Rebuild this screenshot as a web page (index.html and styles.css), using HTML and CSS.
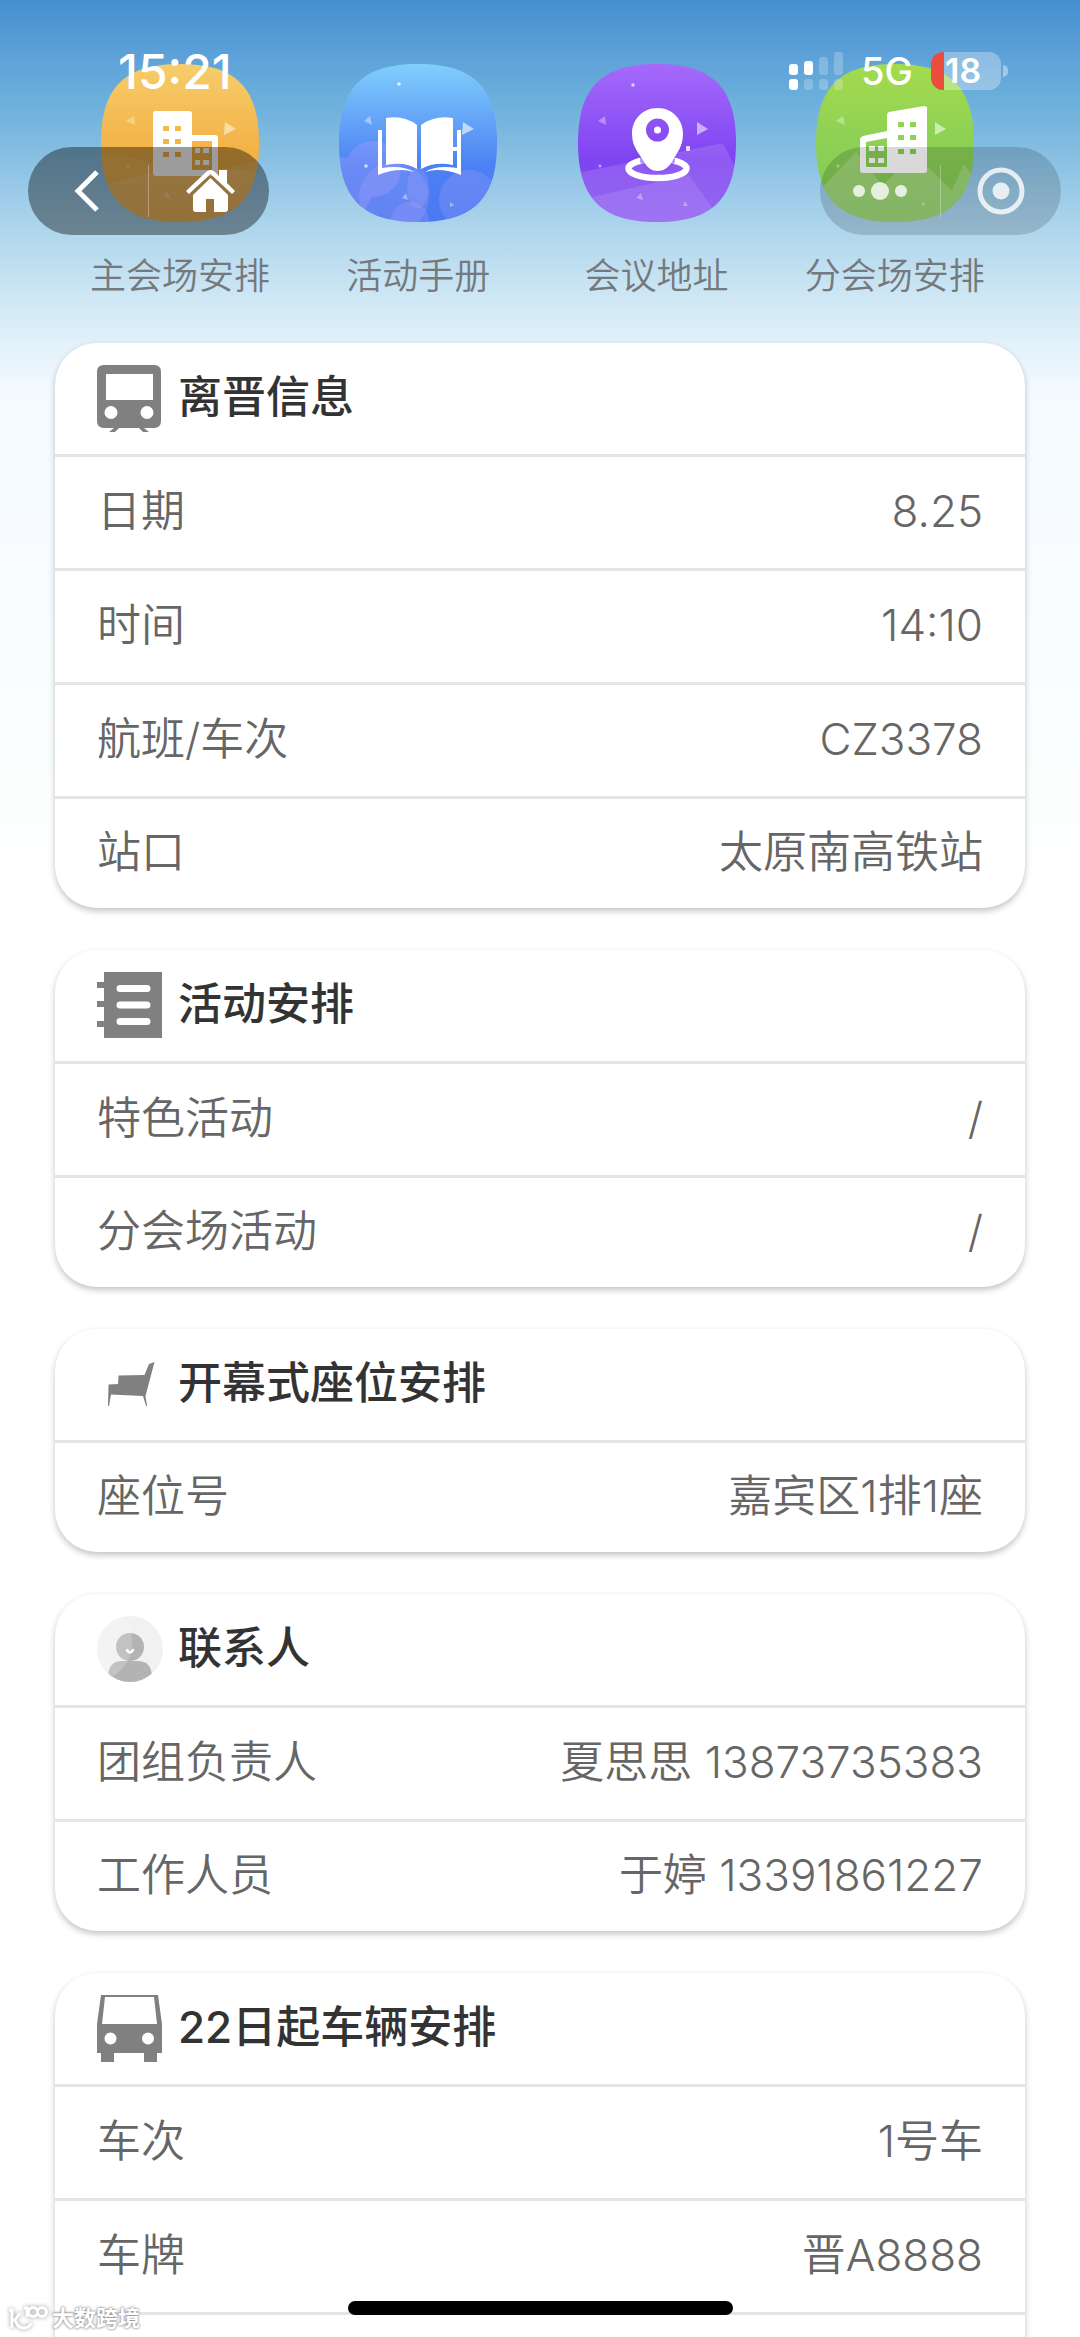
FILE: index.html
```html
<!DOCTYPE html>
<html lang="zh-CN">
<head>
<meta charset="utf-8">
<meta name="viewport" content="width=device-width, initial-scale=1">
<title>会议安排</title>
<link rel="stylesheet" href="styles.css">
</head>
<body>
<div class="screen">
  <header class="status-bar">
    <span class="time">15:21</span>
    <div class="status-right">
      <svg class="signal" viewBox="0 0 54 38" aria-hidden="true">
        <g fill="#fff">
          <rect x="0" y="12" width="9" height="11" rx="3"/><rect x="15" y="9" width="9" height="14" rx="3"/>
          <rect x="0" y="27" width="9" height="11" rx="3"/>
        </g>
        <g fill="#fff" opacity=".22">
          <rect x="30" y="5" width="9" height="18" rx="3"/><rect x="45" y="0" width="9" height="23" rx="3"/>
          <rect x="15" y="27" width="9" height="11" rx="3"/><rect x="30" y="27" width="9" height="11" rx="3"/><rect x="45" y="27" width="9" height="11" rx="3"/>
        </g>
      </svg>
      <span class="network">5G</span>
      <span class="battery"><span class="battery-level">18</span></span>
    </div>
  </header>

  <div class="capsule capsule-nav">
    <button type="button" aria-label="返回">
      <svg class="i-back" viewBox="0 0 25 42"><path d="M23 2 4 21l19 19" fill="none" stroke="#fff" stroke-width="5"/></svg>
    </button>
    <button type="button" aria-label="首页">
      <svg class="i-home" viewBox="0 0 49 42"><path fill="#fff" d="M33 0h8v13l8 8-3 3L24.500 4 3 24l-3-3L20 2q4.500-4 9 0l4 4z"/><path fill="#fff" d="M24.500 8 42 25v14q0 3-3 3H28V29h-8v13H10q-3 0-3-3V25z"/></svg>
    </button>
  </div>
  <div class="capsule capsule-menu">
    <button type="button" aria-label="更多">
      <svg class="i-more" viewBox="0 0 54 20"><g fill="#fff"><circle cx="6" cy="10" r="6"/><circle cx="27" cy="10" r="9"/><circle cx="48" cy="10" r="6"/></g></svg>
    </button>
    <button type="button" aria-label="关闭">
      <svg class="i-close" viewBox="0 0 48 48"><circle cx="24" cy="24" r="21" fill="none" stroke="#fff" stroke-width="5"/><circle cx="24" cy="24" r="8.500" fill="#fff"/></svg>
    </button>
  </div>

  <main class="content">
    <nav class="apps">
      <a class="app" href="#main">
        <svg class="app-icon" viewBox="0 0 158 158" aria-hidden="true">
          <defs>
            <linearGradient id="orange" x1="0" y1="0" x2="0" y2="1"><stop offset="0" stop-color="#f6cd6b"/><stop offset=".55" stop-color="#f3b247"/><stop offset="1" stop-color="#f0a634"/></linearGradient>
            <clipPath id="tile"><path d="M79 0C133 0 158 22 158 79S133 158 79 158 0 136 0 79 25 0 79 0z"/></clipPath>
          </defs>
          <g clip-path="url(#tile)">
            <path fill="url(#orange)" d="M0 0h158v158H0z"/>
            <path fill="#fff" opacity=".1" d="M0 91q45 0 79 22 40-8 79-16v61H0z"/>
            <path fill="#fff" opacity=".12" d="M0 124q60-28 158-16v50H0z"/>
          </g>
          <path fill="#fff" opacity=".5" d="m124 58 11 7-12 6z"/><path fill="#fff" opacity=".3" d="m33 52 1 9-9-4zM66 128l4 7-7-2z"/>
          <circle cx="27" cy="102" r="1.500" fill="#fff" opacity=".4"/>
          <path fill="#fff" fill-rule="evenodd" d="M54 47h34q3 0 3 3v21h23q3 0 3 3v38H55q-3 0-3-3V50q0-3 2-3zM62 62v5h6v-5zm12 0v5h6v-5zM62 75v5h6v-5zm12 0v5h6v-5zM62 88v5h6v-5zm12 0v5h6v-5zM91 77v29h20V77zM94 84h5v5h-5zm8 0h6v5h-6zM94 96h5v5h-5zm8 0h6v5h-6z"/>
        </svg>
        <span>主会场安排</span>
      </a>
      <a class="app" href="#handbook">
        <svg class="app-icon" viewBox="0 0 158 158" aria-hidden="true">
          <defs><linearGradient id="blue" x1="0" y1="0" x2="0" y2="1"><stop offset="0" stop-color="#80cffc"/><stop offset=".65" stop-color="#4c80f3"/><stop offset="1" stop-color="#4b78f0"/></linearGradient></defs>
          <g clip-path="url(#tile)">
            <path fill="url(#blue)" d="M0 0h158v158H0z"/>
            <g fill="#b9a5ff" opacity=".28"><circle cx="34" cy="105" r="28"/><circle cx="1" cy="125" r="32"/></g>
            <g fill="#c4b0ff"><circle cx="55" cy="133" r="35" opacity=".2"/><circle cx="130" cy="136" r="30" opacity=".2"/><circle cx="71" cy="157" r="19" opacity=".2"/><ellipse cx="79" cy="124" rx="11" ry="20" opacity=".2"/></g>
          </g>
          <path fill="#fff" opacity=".6" d="m124 58 11 7-12 6z"/><path fill="#fff" opacity=".4" d="m31 52 2 9-8-4zM67 129l2 7-6-2zM111 138l4 3-4 2z"/>
          <circle cx="60" cy="20" r="1.800" fill="#fff" opacity=".8"/><circle cx="27" cy="102" r="1.800" fill="#fff" opacity=".7"/>
          <g fill="#fff"><path d="M47 54q18-3 31 7v44q-13-8-31-4z"/><path d="M114 54q-18-3-32 7v44q14-8 32-4z"/><path d="M39 66h4v38q21-3 32 4-16-5-36 3z"/><path d="M122 66h-4v38q-21-3-32 4 16-5 36 3z"/><path d="M114 83h5v4h-5z"/></g>
        </svg>
        <span>活动手册</span>
      </a>
      <a class="app" href="#address">
        <svg class="app-icon" viewBox="0 0 158 158" aria-hidden="true">
          <defs><linearGradient id="purple" x1="0" y1="0" x2="0" y2="1"><stop offset="0" stop-color="#a56afa"/><stop offset=".6" stop-color="#7f44f1"/><stop offset="1" stop-color="#8450f0"/></linearGradient></defs>
          <g clip-path="url(#tile)">
            <path fill="url(#purple)" d="M0 0h158v158H0z"/>
            <g fill="#fff" opacity=".12"><path d="M0 109 140 80q5-1 7 3l30 60v15H0z"/><path d="m0 124 100-23 20 57H0z"/><path d="M10 134 134 109q5-1 7 3l20 46H20z"/></g>
            <path fill="#fff" opacity=".1" d="m14 133 97-22 24 34-15 13H20z"/>
          </g>
          <path fill="#fff" opacity=".55" d="m119 58 11 7-11 6z"/><path fill="#fff" opacity=".35" d="m27 52 1 9-8-4zM63 129l2 7-7-2zM107 137l3 5h-5z"/>
          <circle cx="55" cy="21" r="1.800" fill="#fff" opacity=".7"/><circle cx="22" cy="102" r="1.500" fill="#fff" opacity=".5"/><rect x="108" y="82" width="4" height="5" rx="1" fill="#fff" opacity=".8"/>
          <ellipse cx="79.500" cy="104.500" rx="29" ry="9.500" fill="none" stroke="#fff" stroke-width="6.500"/>
          <path fill="#8a52f2" d="M62 90h35v8q-5 10-17 10T62 98z" opacity=".6"/>
          <path fill="#fff" fill-rule="evenodd" d="M79.500 44C94 44 105 55 105 70c0 13-7 20-10 26-4 8-10 11-15.500 11S69 104 65 96c-4-7-11-13-11-26 0-15 11-26 25.500-26zm0 10.500a11.500 11.500 0 1 0 0 23 11.500 11.500 0 1 0 0-23z"/>
          <circle cx="79.500" cy="66" r="3.500" fill="#fff"/>
        </svg>
        <span>会议地址</span>
      </a>
      <a class="app" href="#branch">
        <svg class="app-icon" viewBox="0 0 158 158" aria-hidden="true">
          <defs><linearGradient id="green" x1="0" y1="0" x2="0" y2="1"><stop offset="0" stop-color="#a4db4d"/><stop offset=".55" stop-color="#8bcf56"/><stop offset="1" stop-color="#82cb55"/></linearGradient></defs>
          <g clip-path="url(#tile)">
            <path fill="url(#green)" d="M0 0h158v158H0z"/>
            <g fill="#fff" opacity=".2"><path d="m0 130 40-42 55 70H0z"/><path d="M30 158 98 90l70 68z"/><path d="m137 124 11-24 10 14v44h-30z"/></g>
          </g>
          <path fill="#fff" opacity=".55" d="m119 58 11 7-11 6z"/><path fill="#fff" opacity=".35" d="m27 52 2 9-9-4zM106 137l4 3-4 2z"/><circle cx="22" cy="102" r="1.500" fill="#fff" opacity=".5"/>
          <path fill="#fff" fill-rule="evenodd" d="M71 51q0-2 2-3l35-6q3 0 3 2v62q0 3-3 3H47q-3 0-3-3V76q0-3 3-4l24-5zM82 58v5h6v-5zm12 0v5h6v-5zM82 71v5h6v-5zm12 0v5h6v-5zM82 85v5h6v-5zm12 0v5h6v-5zM50 78v25h21V74zM53 82h6v5h-6zm9 0h6v5h-6zM53 94h6v5h-6zm9 0h6v5h-6z"/>
        </svg>
        <span>分会场安排</span>
      </a>
    </nav>

    <section class="card">
      <h2>
        <svg viewBox="0 0 66 67" aria-hidden="true"><path fill="#808080" fill-rule="evenodd" d="M7 0h50q7 0 7 7v49q0 7-7 7H47l5 4h-6l-4-4H22l-4 4h-6l5-4H7q-7 0-7-7V7q0-7 7-7zm2 9v26h47V9zm5 32a6 6 0 1 0 0 13 6 6 0 1 0 0-13zm36 0a6 6 0 1 0 0 13 6 6 0 1 0 0-13z"/></svg>
        <span>离晋信息</span>
      </h2>
      <dl>
        <div><dt>日期</dt><dd>8.25</dd></div>
        <div><dt>时间</dt><dd>14:10</dd></div>
        <div><dt>航班/车次</dt><dd>CZ3378</dd></div>
        <div><dt>站口</dt><dd>太原南高铁站</dd></div>
      </dl>
    </section>

    <section class="card">
      <h2>
        <svg viewBox="0 0 66 67" aria-hidden="true"><path fill="#808080" d="M7 0h58v66H7V55H0v-6h7V35H0v-6h7V16H0v-6h7z"/><path d="M23 16.500h27M23 33h27M23 49.500h27" stroke="#fff" stroke-width="7" stroke-linecap="round"/></svg>
        <span>活动安排</span>
      </h2>
      <dl>
        <div><dt>特色活动</dt><dd>/</dd></div>
        <div><dt>分会场活动</dt><dd>/</dd></div>
      </dl>
    </section>

    <section class="card">
      <h2>
        <svg viewBox="0 0 66 67" aria-hidden="true"><path fill="#808080" d="m11.500 33.500 9.500-.5.500-8.500 26-.500L52 13l5.500-2-9 34L50 55l-1 0-3-10-32-1.500L12 55h-1z"/></svg>
        <span>开幕式座位安排</span>
      </h2>
      <dl>
        <div><dt>座位号</dt><dd>嘉宾区1排1座</dd></div>
      </dl>
    </section>

    <section class="card">
      <h2>
        <svg viewBox="0 0 66 67" aria-hidden="true"><defs><clipPath id="avatar"><circle cx="33" cy="33" r="33"/></clipPath></defs><g clip-path="url(#avatar)"><path fill="#f1f1f1" d="M0 0h66v66H0z"/><circle cx="33" cy="31" r="14" fill="#b3b3b3"/><path fill="#b3b3b3" d="M11 60q1-15 14-15h16q13 0 14 15v6H11z"/><path fill="#fff" opacity=".2" d="M0 0h28q9 16 7 33-4 18-20 28L0 66z"/></g><path d="M30 34q3 5 6 0" fill="none" stroke="#fff" stroke-width="2.500" stroke-linecap="round"/></svg>
        <span>联系人</span>
      </h2>
      <dl>
        <div><dt>团组负责人</dt><dd>夏思思 13873735383</dd></div>
        <div><dt>工作人员</dt><dd>于婷 13391861227</dd></div>
      </dl>
    </section>

    <section class="card">
      <h2>
        <svg viewBox="0 0 66 67" aria-hidden="true"><path fill="#808080" fill-rule="evenodd" d="M4 0h57l4 29v29h-5v9H47v-9H17v9H4v-9H0V29zm4 2L5 29h55L57 2zm5.500 35.500a6 6 0 1 0 0 12 6 6 0 1 0 0-12zm37.500 0a6 6 0 1 0 0 12 6 6 0 1 0 0-12z"/></svg>
        <span>22日起车辆安排</span>
      </h2>
      <dl>
        <div><dt>车次</dt><dd>1号车</dd></div>
        <div><dt>车牌</dt><dd>晋A8888</dd></div>
        <div></div>
      </dl>
    </section>
  </main>

  <div class="watermark">
    <svg viewBox="0 0 40 26" aria-hidden="true"><g fill="none" stroke="#fff" stroke-width="3"><path d="M1 5h3v18M12 8l-5 7q3 9 10 8 5-1 6-5M16 3h3v9"/><circle cx="25" cy="7" r="4.500"/><circle cx="34" cy="7" r="4.500"/></g></svg>
    <span>大数跨境</span>
  </div>
  <div class="home-indicator"></div>
</div>
</body>
</html>
```
FILE: styles.css
```css
* {
  box-sizing: border-box;
}

body {
  margin: 0;
  background: #fff;
  color: #666;
  font-family: Inter, "Noto Sans CJK SC", sans-serif;
  font-size: 44px;
  font-weight: 350;
}

.screen {
  position: relative;
  height: 100vh;
  overflow: hidden;
  background: linear-gradient(#4490d0 0, #5b9fd8 50px, #6aaedb 95px, #80bae0 140px, #9acae8 190px, #b8dbef 250px, #d9edf7 320px, #edf6fe 372px, #f4faff 390px, #f8fcff 570px, #fdfffe 830px, #fff 900px);
}

/* Status bar and floating capsules lie over the scrolling content */
.status-bar {
  position: absolute;
  z-index: 2;
  top: 44px;
  left: 0;
  right: 0;
  height: 54px;
  padding: 0 79px 0 118px;
  display: flex;
  align-items: center;
  justify-content: space-between;
  color: #fff;
}

.time {
  font-size: 48px;
  font-weight: 500;
}

.status-right {
  display: flex;
  align-items: center;
  gap: 18px;
}

.signal {
  width: 54px;
  height: 38px;
}

.network {
  font-size: 38px;
  font-weight: 500;
}

.battery {
  position: relative;
  width: 70px;
  height: 38px;
}

.battery::after {
  content: "";
  position: absolute;
  top: 13px;
  right: -7px;
  width: 5px;
  height: 12px;
  border-radius: 0 6px 6px 0;
  background: rgba(255, 255, 255, .4);
}

.battery-level {
  display: block;
  height: 38px;
  padding-left: 14px;
  border-radius: 12px;
  background: linear-gradient(90deg, #eb4d3d 13px, rgba(255, 255, 255, .3) 13px);
  font-size: 34px;
  line-height: 38px;
  font-weight: 600;
}

.capsule {
  position: absolute;
  z-index: 1;
  top: 147px;
  width: 241px;
  height: 88px;
  border-radius: 44px;
  display: grid;
  grid-template-columns: 1fr 1fr;
}

.capsule-nav {
  left: 28px;
  background: rgba(0, 0, 0, .39);
}

.capsule-menu {
  right: 19px;
  background: rgba(0, 0, 0, .15);
}

.capsule button {
  display: flex;
  align-items: center;
  justify-content: center;
  padding: 0;
  border: 0;
  background: none;
}

.capsule::before {
  content: "";
  position: absolute;
  top: 18px;
  left: 120px;
  width: 1px;
  height: 52px;
  background: rgba(255, 255, 255, .3);
}

.capsule-nav button:first-child {
  padding-right: 4px;
}

.capsule-nav button:last-child {
  padding-left: 4px;
}

.capsule-menu svg {
  opacity: .8;
}

.i-back {
  width: 25px;
  height: 42px;
}

.i-home {
  width: 49px;
  height: 42px;
}

.i-more {
  width: 54px;
  height: 20px;
}

.i-close {
  width: 48px;
  height: 48px;
}

.content {
  padding: 64px 55px 0;
}

.apps {
  display: grid;
  grid-template-columns: repeat(4, 1fr);
  height: 279px;
  padding: 0 11px 0 6px;
}

.app {
  display: flex;
  flex-direction: column;
  align-items: center;
  gap: 26px;
  color: #75797d;
  font-size: 36px;
  line-height: 56px;
  text-decoration: none;
  white-space: nowrap;
}

.app-icon {
  width: 158px;
  height: 158px;
}

.card {
  margin-bottom: 42px;
  border-radius: 42px;
  background: #fff;
  box-shadow: 0 3px 6px rgba(0, 0, 0, .24);
}

.card h2 {
  display: flex;
  align-items: center;
  gap: 15px;
  height: 114px;
  margin: 0;
  padding: 0 42px;
  border-bottom: 3px solid #e5e5e5;
  color: #333;
  font-size: 44px;
  line-height: 64px;
  font-weight: 500;
}

.card h2 svg {
  width: 66px;
  height: 67px;
}

.card h2 span {
  padding-bottom: 4px;
}

.card dl {
  margin: 0;
}

.card dl div {
  display: flex;
  align-items: center;
  justify-content: space-between;
  height: 114px;
  padding: 0 42px 4px;
  border-bottom: 3px solid #e5e5e5;
  line-height: 64px;
}

.card dl div:last-child {
  height: 109px;
  border-bottom: 0;
}

.card dd {
  margin: 0;
}

.watermark {
  position: absolute;
  z-index: 1;
  left: 8px;
  bottom: 2px;
  display: flex;
  align-items: center;
  gap: 4px;
  color: #fff;
  font-size: 22px;
  line-height: 34px;
  font-weight: 700;
  text-shadow: 0 0 3px #888, 0 0 2px #999;
}

.watermark svg {
  width: 40px;
  height: 26px;
  overflow: visible;
  filter: drop-shadow(0 0 2px #999);
}

.home-indicator {
  position: absolute;
  z-index: 1;
  left: 50%;
  bottom: 22px;
  width: 385px;
  height: 14px;
  margin-left: -192px;
  border-radius: 7px;
  background: #000;
}
```
